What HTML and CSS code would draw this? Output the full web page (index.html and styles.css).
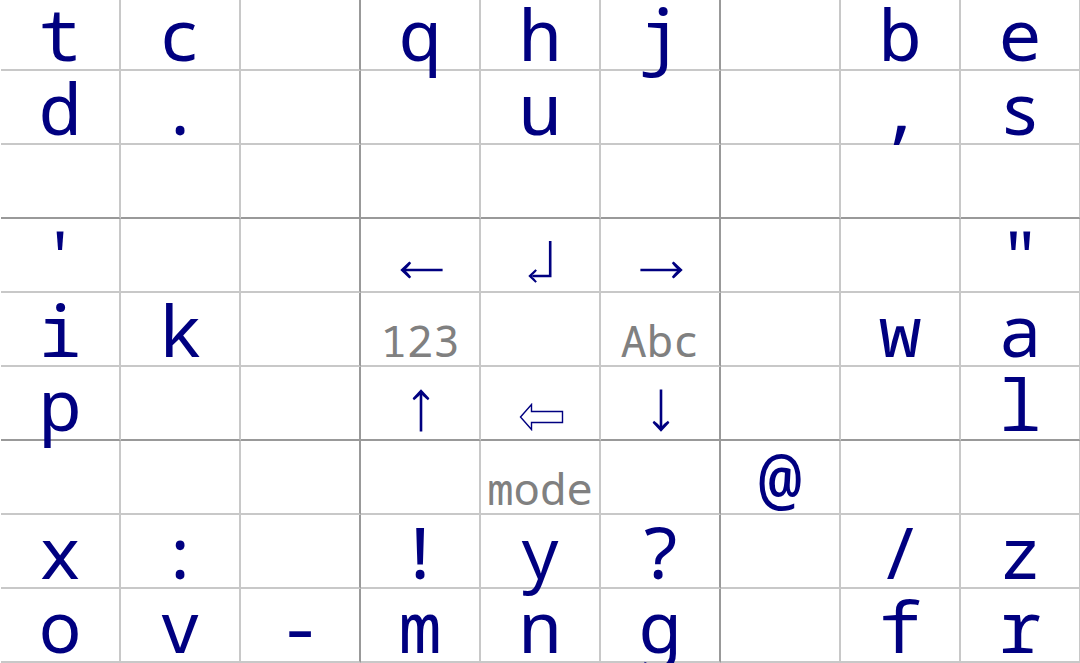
FILE: index.html
```html
<!DOCTYPE html>
<html>
<head>
<meta charset="utf-8">
<link rel="stylesheet" href="styles.css">
</head>
<body>
<div class="board">
  <div class="row">
    <div class="cell">t</div><div class="cell">c</div><div class="cell"></div>
    <div class="cell">q</div><div class="cell">h</div><div class="cell">j</div>
    <div class="cell"></div><div class="cell">b</div><div class="cell">e</div>
  </div>
  <div class="row">
    <div class="cell">d</div><div class="cell">.</div><div class="cell"></div>
    <div class="cell"></div><div class="cell">u</div><div class="cell"></div>
    <div class="cell"></div><div class="cell">,</div><div class="cell">s</div>
  </div>
  <div class="row thick">
    <div class="cell"></div><div class="cell"></div><div class="cell"></div>
    <div class="cell"></div><div class="cell"></div><div class="cell"></div>
    <div class="cell"></div><div class="cell"></div><div class="cell"></div>
  </div>
  <div class="row">
    <div class="cell">'</div><div class="cell"></div><div class="cell"></div>
    <div class="cell"><svg class="arrow-h" width="43" height="18" viewBox="0 0 43 18" aria-label="←"><path d="M0.3 9 L9.3 0.6 L11.2 2 C9 4.8 7.6 6.6 6 7.7 L42.6 7.7 L42.6 10.3 L6 10.3 C7.6 11.4 9 13.2 11.2 16 L9.3 17.4 Z" fill="#000080"/></svg></div>
    <div class="cell"><svg class="arrow-ret" width="24" height="42" viewBox="0 0 24 42" aria-label="↲"><path d="M22.2 0 V35 H4.5" fill="none" stroke="#000080" stroke-width="2.6"/><path d="M0.3 35 L7.4 28.3 L8.9 29.4 C7.2 31.4 6.2 32.7 4.6 33.7 L4.6 36.3 C6.2 37.3 7.2 38.6 8.9 40.6 L7.4 41.7 Z" fill="#000080"/></svg></div>
    <div class="cell"><svg class="arrow-h" width="43" height="18" viewBox="0 0 43 18" aria-label="→"><path transform="translate(43 0) scale(-1 1)" d="M0.3 9 L9.3 0.6 L11.2 2 C9 4.8 7.6 6.6 6 7.7 L42.6 7.7 L42.6 10.3 L6 10.3 C7.6 11.4 9 13.2 11.2 16 L9.3 17.4 Z" fill="#000080"/></svg></div>
    <div class="cell"></div><div class="cell"></div><div class="cell">"</div>
  </div>
  <div class="row">
    <div class="cell">i</div><div class="cell">k</div><div class="cell"></div>
    <div class="cell"><span class="label">123</span></div><div class="cell"></div><div class="cell"><span class="label">Abc</span></div>
    <div class="cell"></div><div class="cell">w</div><div class="cell">a</div>
  </div>
  <div class="row thick">
    <div class="cell">p</div><div class="cell"></div><div class="cell"></div>
    <div class="cell"><svg class="arrow-v" width="18" height="43" viewBox="0 0 18 43" aria-label="↑"><path transform="translate(18 0) rotate(90)" d="M0.3 9 L9.3 0.6 L11.2 2 C9 4.8 7.6 6.6 6 7.7 L42.6 7.7 L42.6 10.3 L6 10.3 C7.6 11.4 9 13.2 11.2 16 L9.3 17.4 Z" fill="#000080"/></svg></div>
    <div class="cell"><svg class="white-arrow" width="45" height="28" viewBox="0 0 45 28" aria-label="⇦"><path d="M1.5 14 L12.5 1.5 L12.5 8.5 L43.5 8.5 L43.5 19.5 L12.5 19.5 L12.5 26.5 Z" fill="none" stroke="#000080" stroke-width="1.4"/></svg></div>
    <div class="cell"><svg class="arrow-v" width="18" height="43" viewBox="0 0 18 43" aria-label="↓"><path transform="translate(0 43) rotate(-90)" d="M0.3 9 L9.3 0.6 L11.2 2 C9 4.8 7.6 6.6 6 7.7 L42.6 7.7 L42.6 10.3 L6 10.3 C7.6 11.4 9 13.2 11.2 16 L9.3 17.4 Z" fill="#000080"/></svg></div>
    <div class="cell"></div><div class="cell"></div><div class="cell">l</div>
  </div>
  <div class="row">
    <div class="cell"></div><div class="cell"></div><div class="cell"></div>
    <div class="cell"></div><div class="cell"><span class="label">mode</span></div><div class="cell"></div>
    <div class="cell">@</div><div class="cell"></div><div class="cell"></div>
  </div>
  <div class="row">
    <div class="cell">x</div><div class="cell">:</div><div class="cell"></div>
    <div class="cell">!</div><div class="cell">y</div><div class="cell">?</div>
    <div class="cell"></div><div class="cell">/</div><div class="cell">z</div>
  </div>
  <div class="row">
    <div class="cell">o</div><div class="cell">v</div><div class="cell">-</div>
    <div class="cell">m</div><div class="cell">n</div><div class="cell">g</div>
    <div class="cell"></div><div class="cell">f</div><div class="cell">r</div>
  </div>
</div>
</body>
</html>
```

FILE: styles.css
```css
html, body {
  margin: 0;
  padding: 0;
  background: #ffffff;
  overflow: hidden;
}

.board {
  margin-top: -3px;
  margin-left: 1px;
  width: 1080px;
  font-family: "Noto Sans Mono", "Droid Sans Mono", "DejaVu Sans Mono", "Liberation Mono", monospace;
  color: #000080;
}

.row {
  display: grid;
  grid-template-columns: repeat(9, 120px);
  height: 74px;
}

.cell {
  box-sizing: border-box;
  height: 74px;
  border-right: 2px solid #c8c8c8;
  border-bottom: 2px solid #c8c8c8;
  font-size: 72px;
  line-height: 72px;
  text-align: center;
  white-space: nowrap;
  overflow: visible;
}

.row .cell:nth-child(3),
.row .cell:nth-child(6) {
  border-right-color: #999999;
}

.row.thick .cell {
  border-bottom-color: #999999;
}

.label {
  font-size: 44px;
  line-height: 1;
  color: #808080;
}

.arrow-h {
  vertical-align: 4px;
  margin-left: 2px;
}

.arrow-ret {
  vertical-align: 0;
}

.arrow-v {
  vertical-align: -1px;
  margin-left: 1px;
}

.white-arrow {
  vertical-align: 0;
  margin-left: 2px;
}
```
